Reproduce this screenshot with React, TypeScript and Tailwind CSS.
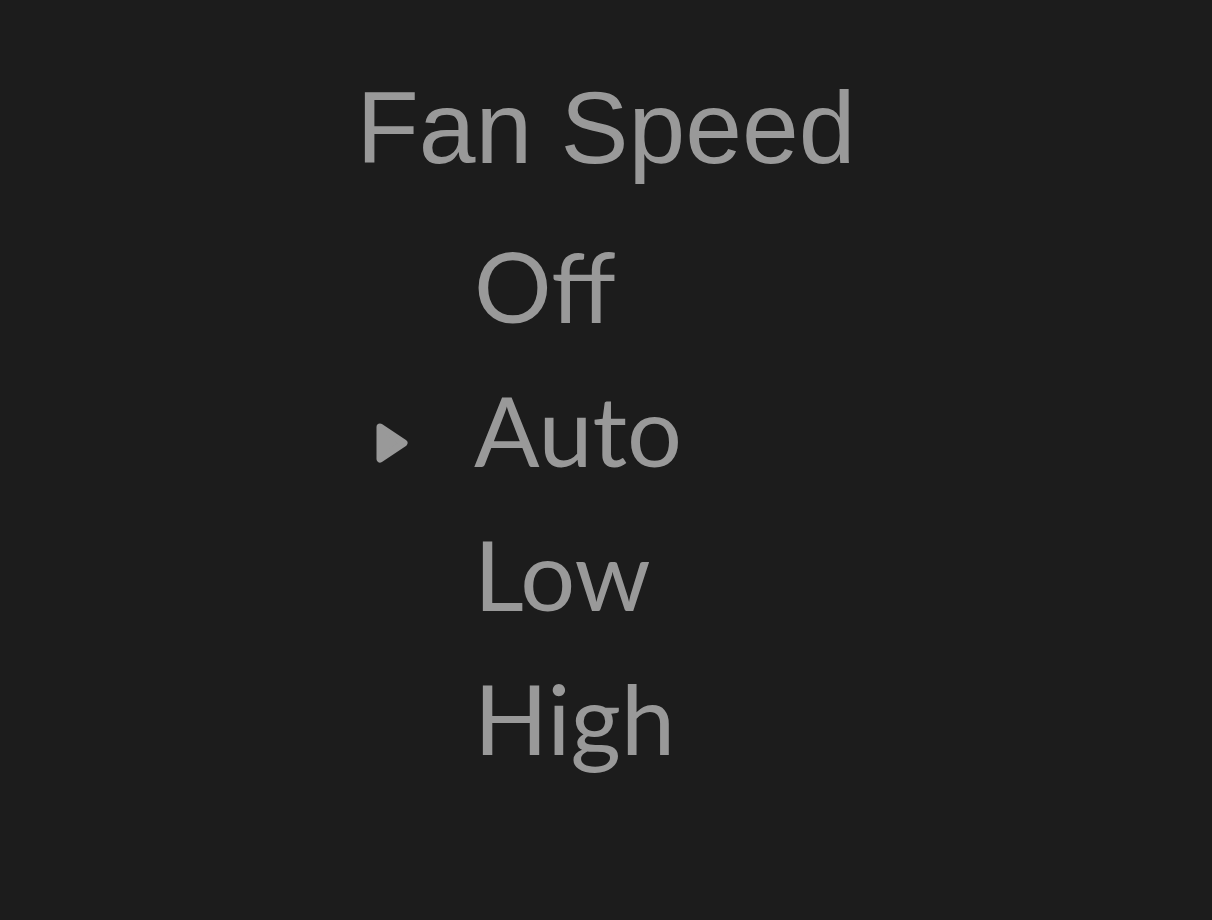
const options = ['Off', 'Auto', 'Low', 'High'];

export default function App() {
  const selected = 'Auto';

  return (
    <div className="w-full h-[920px] bg-[#1c1c1c] flex flex-col items-center text-[#999999]">
      <h1 className="mt-[77px] text-[102px] leading-none font-['Liberation_Sans',Arial,sans-serif] font-normal">Fan Speed</h1>
      <ul className="w-full pl-[375px] mt-[35px] font-['Lato',sans-serif] font-normal text-[97px] leading-[144px]">
        {options.map(opt => (
          <li key={opt} className="flex items-center">
            <span className="w-[99px] shrink-0 flex items-center">
              {opt === selected && (
                <svg width="32" height="40" viewBox="0 0 32 40" className="mt-[25px] ml-[1px]">
                  <polygon points="4,4 28,20 4,36" fill="#999999" stroke="#999999" strokeWidth="7" strokeLinejoin="round" />
                </svg>
              )}
            </span>
            <span>{opt}</span>
          </li>
        ))}
      </ul>
    </div>
  );
}
